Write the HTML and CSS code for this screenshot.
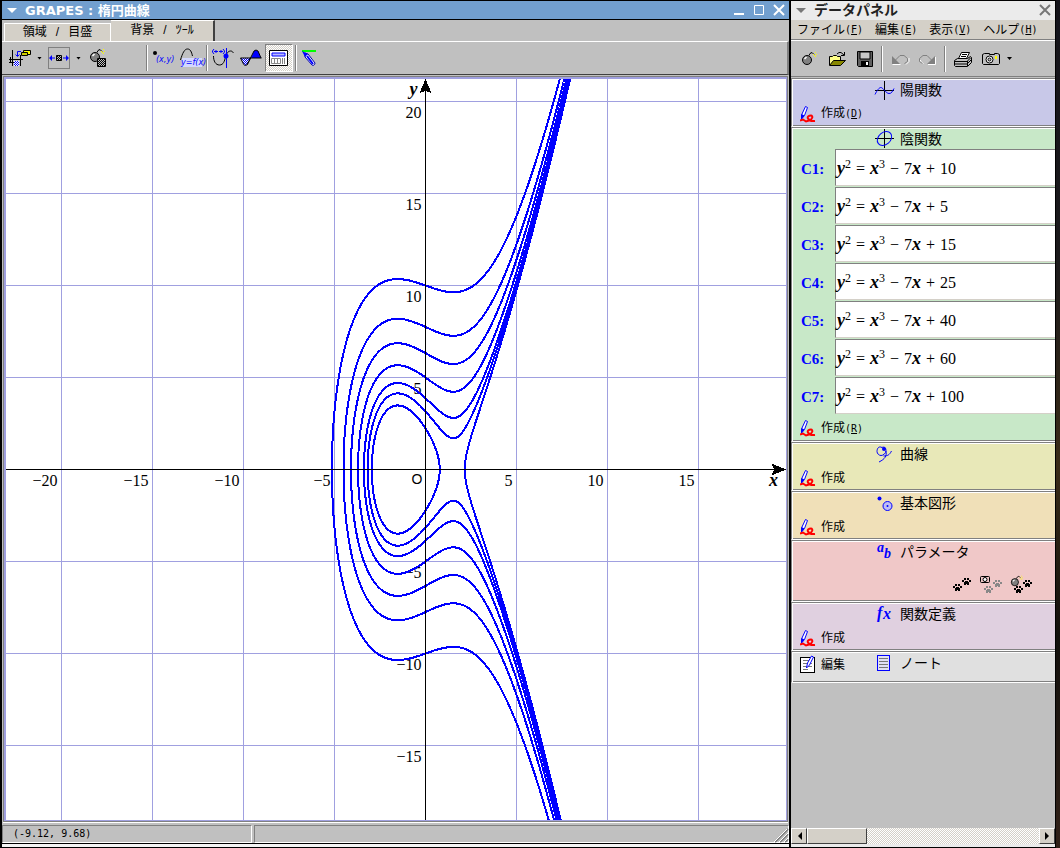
FILE: index.html
```html
<!DOCTYPE html>
<html lang="ja">
<head>
<meta charset="utf-8">
<title>GRAPES : 楕円曲線</title>
<link rel="stylesheet" href="styles.css">
</head>
<body>
<svg class="defs" aria-hidden="true">
  <defs>
    <pattern id="dither" width="2" height="2" patternUnits="userSpaceOnUse"><rect width="1" height="1"/><rect x="1" y="1" width="1" height="1"/></pattern>
    <pattern id="dither-blue" width="2" height="2" patternUnits="userSpaceOnUse"><rect width="2" height="2" fill="#fff"/><rect width="1" height="1" fill="#00f"/><rect x="1" y="1" width="1" height="1" fill="#00f"/></pattern>
    <symbol id="pen" viewBox="0 0 17 18">
      <path d="M5.500 1.500l2 1-3 8-3 3.500v-4z" fill="#fff" stroke="#00f"/><path d="M1.500 9l3 1.500-3 4z" fill="#00f"/>
      <path d="M0 15.500l3-1 3 2 3-1c4-1 4-5 2-5s-4 1-3 3 3 3 7 2.500" fill="none" stroke="#f00" stroke-width="2"/>
    </symbol>
    <symbol id="bomb" viewBox="0 0 16 15">
      <circle cx="6" cy="9" r="4.500" fill="#808080" stroke="#000"/><path d="M3.500 8l2-2" stroke="#fff" stroke-width="1.500"/><path d="M8 4.500l1-2 2-1 2 2" fill="none" stroke="#000"/>
      <path d="M12 3.500h1M14 1.500h1M15 3.500h1M14 5.500h1M13 4.500h1" stroke="#ff0"/>
    </symbol>
    <symbol id="paw" viewBox="0 0 9 8"><path d="M0 2h2v2H0zM2 0h2v2H2zM5 0h2v2H5zM7 2h2v2H7zM3 3h3v1h1v3H5V6H4v1H2V4h1z"/></symbol>
  </defs>
</svg>

<main class="window graph-window">
  <header class="titlebar">
    <span class="menu-mark"></span>
    <h1 class="title">GRAPES : 楕円曲線</h1>
    <div class="window-buttons">
      <button aria-label="最小化"><svg width="12" height="12"><path d="M1 10h10" stroke="#fff" stroke-width="2"/></svg></button>
      <button aria-label="最大化"><svg width="12" height="12"><path d="M1.500 1.500h9v9h-9z" fill="none" stroke="#fff"/></svg></button>
      <button aria-label="閉じる"><svg width="12" height="12"><path d="M1 1l10 10M11 1L1 11" stroke="#fff" stroke-width="2"/></svg></button>
    </div>
  </header>
  <nav class="tabs">
    <button class="tab">領域<span>/</span>目盛</button>
    <button class="tab tab-active">背景<span>/</span>ﾂｰﾙ</button>
  </nav>
  <div class="toolbar main-tools">
    <button class="tool" aria-label="領域"><svg width="22" height="18"><path d="M0 10.500h14M3.500 1v16M11.500 6v11M0 13.500h5M1.500 8v5" stroke="#000"/><path d="M12 2.500H8.500V7M6.500 5.500l2 2 2-2" fill="none" stroke="#00f"/><path d="M5 12h5v5H5z" fill="url(#dither-blue)"/><path d="M14.500 1.500h7v4h-7z" fill="#ff0" stroke="#000"/><path d="M12.500 3.500h6v3h-6z" fill="#cc0" stroke="#000"/></svg></button>
    <button class="drop" aria-label="領域メニュー"></button>
    <button class="tool framed" aria-label="移動"><svg width="20" height="16"><path d="M7.500 5.500h5v5h-5z" fill="url(#dither)" stroke="#000"/><path d="M2 8h4M14 8h4" stroke="#00f"/><path d="M0 8l3-3v6zM20 8l-3-3v6z" fill="#00f"/></svg></button>
    <button class="drop" aria-label="移動メニュー"></button>
    <button class="tool clear-tool" aria-label="消去"><svg width="18" height="20"><use href="#bomb" width="16" height="15"/><path d="M8.500 10.500h8v8h-8z" fill="#c0c0c0" stroke="#000"/><path d="M9 11h7v7H9z" fill="url(#dither)"/></svg></button>
    <i class="sep sep-first"></i>
    <button class="tool" aria-label="点の座標"><svg width="22" height="20"><circle cx="3" cy="5" r="2"/><text class="glyph" x="4" y="14">(x,y)</text></svg></button>
    <button class="tool" aria-label="関数の式"><svg width="22" height="22"><path d="M.500 13c2-7 4-11 7-11s4 3 5 7" fill="none" stroke="#000"/><rect x="2" y="11" width="20" height="9" fill="#d4d8ff"/><text class="glyph" x="1" y="18">y=f(x)</text></svg></button>
    <i class="sep"></i>
    <button class="tool" aria-label="交点"><svg width="22" height="22"><path d="M1.500 9c0 5 2 9 6 9s5-4 6-8 3-6 5-6 2 1 3 2" fill="none" stroke="#000"/><path d="M14.500 1v20" stroke="#00f"/><circle cx="14" cy="9" r="2.500" fill="#00f"/><path d="M2 2L.500 4v1L2 7M11 2l1.500 2v1L11 7M2 4.500h4M4 3v3M7 4.500h4M9 3v3" fill="none" stroke="#00f"/></svg></button>
    <button class="tool" aria-label="面積"><svg width="22" height="18"><path d="M.500 9h10l-3 6-2 2-2-2z" fill="url(#dither-blue)" stroke="#000"/><path d="M11 9l3-7 2-1 2 1 3 7z" fill="#00f"/><path d="M10 9h11.500M7 16l7-14 2-1 2 1 3 7" fill="none" stroke="#000"/></svg></button>
    <button class="tool pressed" aria-label="電卓" aria-pressed="true"><svg width="20" height="16"><path d="M.500.500h18v15H.500z" fill="#fff" stroke="#000"/><path d="M3 3h13v3H3z" fill="#bbf" stroke="#00f"/><path d="M2.500 8.500h9v5h-9z" fill="#fff" stroke="#888"/><path d="M5.500 8v6M8.500 8v6" stroke="#888"/><path d="M13 9h4M13 11h4M13 13h4" stroke="#000" stroke-dasharray="1 1"/></svg></button>
    <i class="sep"></i>
    <button class="tool" aria-label="マーカー"><svg width="18" height="18"><path d="M1 2h14" stroke="#0f0" stroke-width="2"/><path d="M4 4l3 1 7 9c0 2-2 3-3 2L4 8z" fill="#fff" stroke="#00a"/><path d="M6 7l6 8" stroke="#00f" stroke-width="2"/><path d="M1 2l6 3-3 3z" fill="#00f"/></svg></button>
  </div>
  <section class="plot" aria-label="グラフ"><svg id="graph" class="graph"></svg></section>
  <footer class="statusbar">
    <output class="status coords">(-9.12, 9.68)</output>
    <div class="status"><svg width="13" height="13"><path d="M0 13L13 0M5 13l8-8M10 13l3-3" stroke="#808080" stroke-width="2"/><path d="M-1 13L12 0M4 13l9-9M9 13l4-4" stroke="#fff"/></svg></div>
  </footer>
</main>

<aside class="window data-window">
  <header class="titlebar panel-title">
    <span class="menu-mark"></span>
    <h2 class="title">データパネル</h2>
    <div class="window-buttons"><button aria-label="閉じる"><svg width="12" height="12"><path d="M1 1l10 10M11 1L1 11" stroke="#777" stroke-width="2"/></svg></button></div>
  </header>
  <nav class="menubar">
    <button>ファイル<span class="key">(<u>F</u>)</span></button>
    <button>編集<span class="key">(<u>E</u>)</span></button>
    <button>表示<span class="key">(<u>V</u>)</span></button>
    <button>ヘルプ<span class="key">(<u>H</u>)</span></button>
  </nav>
  <div class="toolbar panel-tools">
    <button class="tool" aria-label="新規"><svg width="16" height="15"><use href="#bomb" width="16" height="15"/></svg></button>
    <button class="tool" aria-label="開く"><svg width="18" height="16"><path d="M1.500 14V5.500h3l1-1h3l1 1h3v4" fill="#ff8" stroke="#000"/><path d="M1.500 14.500l4-5h12l-5 5z" fill="#880" stroke="#000"/><path d="M9 3l2-1.500h2l3 2.500M16.500 1v3.500H13" fill="none" stroke="#000"/></svg></button>
    <button class="tool" aria-label="保存"><svg width="16" height="16"><path d="M.500.500h15v15h-14l-1-1z" fill="#606060" stroke="#000"/><path d="M3 1h10v7H3z" fill="#c8c8c8" stroke="#000"/><path d="M4 10h8v5H4z" fill="#000"/><path d="M9 11h2v3H9z" fill="#fff"/></svg></button>
    <i class="sep"></i>
    <button class="tool" aria-label="元に戻す" disabled><svg width="18" height="14"><path d="M1.500 12.500h8M15 12.500l3-3V6" fill="none" stroke="#fff"/><path d="M1 4v8h8z" fill="#808080"/><path d="M4 8.500l5-5h4l3.500 3v3l-3 2" fill="none" stroke="#808080"/></svg></button>
    <button class="tool" aria-label="やり直し" disabled><svg width="18" height="14"><path d="M9 12.500h7.500V5M1.500 8v1l3 3" fill="none" stroke="#fff"/><path d="M16 4v8H8z" fill="#808080"/><path d="M13 8.500l-5-5H4l-3.500 3v3l3 2" fill="none" stroke="#808080"/></svg></button>
    <i class="sep"></i>
    <button class="tool" aria-label="印刷"><svg width="18" height="16"><path d="M4.500 7.500l3-6h8l-3 6z" fill="#fff" stroke="#000"/><path d="M8 3.500h5M7 5.500h5" stroke="#000"/><path d="M.500 9.500l3-2h10l3-2 1 1v5l-4 4h-12l-1-1z" fill="#c0c0c0" stroke="#000"/><path d="M1 10.500h12l4-4M1 13h12l4-4M13.500 10v5" fill="none" stroke="#000"/></svg></button>
    <button class="tool" aria-label="画像"><svg width="18" height="14"><path d="M2.500 1.500h5v1h5v-1h3l2 1v9l-1 1h-15l-1-1v-9z" fill="#c0c0c0" stroke="#000"/><circle cx="7.500" cy="7.500" r="3.500" stroke="#000" fill="#fff"/><circle cx="7.500" cy="7.500" r="1.500" stroke="#000" fill="#c0c0c0"/><path d="M13 4h2v3h-2z" fill="#ff0"/></svg></button>
    <button class="drop" aria-label="画像メニュー"></button>
  </div>

  <div class="sections">
    <section class="section explicit">
      <h3 class="heading"><svg width="19" height="19"><path d="M0 9.500h19M9.500 0v19" stroke="#000"/><path d="M0 13.500c2-4 4-7 6-7s5 6 8 6 3-2 5-5" fill="none" stroke="#00f"/></svg>陽関数</h3>
      <button class="create"><svg width="17" height="18"><use href="#pen"/></svg><span>作成<span class="key">(<u>D</u>)</span></span></button>
    </section>
    <section class="section implicit">
      <h3 class="heading"><svg width="19" height="19"><path d="M0 9.500h19M9.500 0v19" stroke="#000"/><ellipse cx="9.500" cy="9.500" rx="8" ry="6" transform="rotate(-40 9.500 9.500)" fill="none" stroke="#00f"/></svg>陰関数</h3>
      <dl class="formulas" id="formulas"></dl>
      <button class="create"><svg width="17" height="18"><use href="#pen"/></svg><span>作成<span class="key">(<u>R</u>)</span></span></button>
    </section>
    <section class="section curve">
      <h3 class="heading"><svg width="19" height="19"><path d="M7 2.500c-4-2-5 2-5 4s2 4 4 4 5-2 5-5-2-4-4-3M16.500 6c-2 4-4 5-8 5M11 6c1 5-1 8-7 11" fill="none" stroke="#00f"/><circle cx="9" cy="4" r="2" fill="#00f"/></svg>曲線</h3>
      <button class="create"><svg width="17" height="18"><use href="#pen"/></svg>作成</button>
    </section>
    <section class="section shape">
      <h3 class="heading"><svg width="19" height="19"><circle cx="4.500" cy="4.500" r="2" fill="#00f"/><circle cx="12.500" cy="12" r="4.500" fill="#bdbdf4" stroke="#00f"/><circle cx="12.500" cy="12" r="1" fill="#00f"/></svg>基本図形</h3>
      <button class="create"><svg width="17" height="18"><use href="#pen"/></svg>作成</button>
    </section>
    <section class="section parameter">
      <h3 class="heading"><svg width="19" height="19"><text class="letter" x="2" y="9">a</text><text class="letter" x="9" y="15">b</text></svg>パラメータ</h3>
      <div class="paws">
        <button aria-label="残像"><svg width="20" height="20"><use href="#paw" x="1" y="9" width="9" height="8"/><use href="#paw" x="10" y="3" width="9" height="8"/></svg></button>
        <button aria-label="残像を撮る"><svg width="22" height="20"><g fill="#888"><use href="#paw" x="4" y="11" width="9" height="8"/><use href="#paw" x="13" y="5" width="9" height="8"/></g><rect x=".5" y="1.5" width="9" height="6" rx="1" fill="#f0c8c8" stroke="#000"/><circle cx="5" cy="4.500" r="2" fill="#fff" stroke="#000"/></svg></button>
        <button aria-label="残像を消す"><svg width="22" height="20"><use href="#bomb" width="13" height="12"/><use href="#paw" x="4" y="11" width="9" height="8"/><use href="#paw" x="13" y="5" width="9" height="8"/></svg></button>
      </div>
    </section>
    <section class="section function">
      <h3 class="heading"><svg width="19" height="19"><text class="fx" x="2" y="13">f</text><text class="fx" x="8" y="14">x</text></svg>関数定義</h3>
      <button class="create"><svg width="17" height="18"><use href="#pen"/></svg>作成</button>
    </section>
    <section class="section note">
      <button class="create"><svg width="17" height="19"><rect x=".5" y="2.5" width="14" height="15" fill="#fff" stroke="#000"/><path d="M3 5.500h9M3 8.500h9M3 11.500h9M3 14.500h5" stroke="#777"/><path d="M11.500 1l2 1-4 8-3 3 1-5z" fill="#fff" stroke="#00f"/></svg>編集</button>
      <h3 class="heading"><svg width="19" height="17"><rect x="2.500" y=".5" width="12" height="15" fill="#e0e0f4" stroke="#00f"/><path d="M4 3.500h9M4 6.500h9M4 9.500h9M4 12.500h9" stroke="#777"/></svg>ノート</h3>
    </section>
  </div>
  <div class="scrollbar">
    <button aria-label="左へ"><svg width="5" height="8"><path d="M5 0v8L1 4z"/></svg></button>
    <div class="track"><div class="thumb"></div></div>
    <button aria-label="右へ"><svg width="5" height="8"><path d="M0 0v8l4-4z"/></svg></button>
  </div>
</aside>
<script src="graph.js"></script>
</body>
</html>
```

FILE: styles.css
```css
* { box-sizing: border-box; }
body {
  margin: 0;
  height: 100vh;
  padding: 1px 5px 1px 2px;
  display: grid;
  grid-template-columns: minmax(0, 1fr) 264px;
  gap: 2px;
  background: linear-gradient(#14131a, #1c1a1c 30%, #3a2c18 55%, #12100c 75%, #302018) right / 4px 100% no-repeat #000;
  font: 12px/16px "Liberation Sans", "Noto Sans CJK JP", sans-serif;
  color: #000;
}
.defs { position: absolute; width: 0; height: 0; }
h1, h2, h3, dl, dd, dt { margin: 0; font-weight: normal; }
button { border: 0; padding: 0; margin: 0; background: none; font: inherit; color: inherit; }
svg { display: block; flex: none; overflow: visible; }

.window { display: flex; flex-direction: column; min-width: 0; min-height: 0; background: #c0c0c0; border-bottom: 3px solid #ebebeb; }
.graph-window { border-bottom-color: #f4f4f4; }

.titlebar { display: flex; align-items: center; gap: 8px; height: 19px; flex: none; padding: 0 4px 0 5px; background: #729fcf; border-bottom: 1px solid #000; color: #fff; }
.title { flex: 1; font: bold 13px/17px "DejaVu Sans", "Noto Sans CJK JP", sans-serif; }
.menu-mark { width: 9px; border: solid transparent; border-width: 5px 5px 0; border-top-color: currentColor; }
.window-buttons { display: flex; gap: 8px; }
.panel-title { background: #ebebeb; border-bottom-color: #ebebeb; color: #777; }
.panel-title .title { color: #222; font-size: 14px; }

.tabs { display: flex; align-items: flex-end; height: 21px; flex: none; padding-left: 2px; }
.tab { display: flex; justify-content: center; gap: 9px; width: 107px; height: 18px; background: #d4d0c8; border: 1px solid #fff; border-bottom-width: 0; }
.tab-active { width: 104px; height: 21px; padding-top: 1px; border-left: 0; border-right: 2px solid #404040; }

.toolbar { display: flex; align-items: center; flex: none; border-top: 1px solid #fff; }
.tool { display: flex; align-items: center; justify-content: center; }
.drop { width: 5px; height: 3px; background: #000; clip-path: polygon(0 0, 100% 0, 50% 100%); }
.sep { width: 2px; height: 26px; margin: 0 -2px; background: linear-gradient(90deg, #808080 50%, #fff 50%); }
.main-tools { height: 34px; gap: 6px; padding-left: 7px; border-right: 2px solid #808080; border-bottom: 1px solid #404040; }
.framed { width: 22px; height: 22px; border: 1px solid #808080; }
.clear-tool { margin-left: 2px; }
.sep-first { margin-left: 33px; }
.pressed { width: 28px; height: 28px; margin: 0 -2px 0 -3px; border: 1px solid; border-color: #808080 #fff #fff #808080; background: repeating-conic-gradient(#fff 0 25%, #d4d0c8 0 50%) 0 0 / 2px 2px; }
.glyph { font: italic 8px "DejaVu Sans", sans-serif; fill: #00f; }

.plot { flex: 1; min-height: 0; margin: 1px 1px 0; border: 1px solid #808080; box-shadow: 0 1px #fff; background: #fff; }
.graph { width: 100%; height: 100%; border: solid #a0a0e0; border-width: 2px 1px 1px 2px; background: #fff; overflow: hidden; shape-rendering: crispEdges; }
.grid { stroke: #a0a0e0; fill: none; }
.axis { stroke: #000; fill: none; }
.curve-line { stroke: #00f; stroke-width: 2; fill: none; }
.tick { font: 16px "Liberation Serif", serif; text-anchor: end; }
.axis-name { font: italic bold 18px "Liberation Serif", serif; }
.origin { font: 14px "Liberation Sans", sans-serif; text-anchor: end; }

.statusbar { display: flex; gap: 2px; height: 22px; flex: none; padding-top: 3px; border-bottom: 1px solid #000; }
.status { flex: 1; display: flex; align-items: flex-end; justify-content: flex-end; border: 1px solid; border-color: #808080 #fff #fff #808080; }
.coords { flex: 0 0 250px; align-items: center; justify-content: flex-start; padding-left: 10px; font: 10px/16px "DejaVu Sans Mono", monospace; }

.menubar { display: flex; gap: 12px; height: 20px; flex: none; padding: 0 6px; background: #d4d0c8; border-bottom: 1px solid #808080; white-space: nowrap; }
.menubar button { display: flex; align-items: center; }
.key { font: 10px/16px "DejaVu Sans Mono", monospace; }
.panel-tools { height: 37px; gap: 9px; padding-left: 8px; border-bottom: 1px solid #808080; }
.panel-tools .tool { width: 19px; }
.panel-tools .drop { margin-left: -2px; }

.sections { flex: 1; min-height: 0; padding-top: 1px; }
.section { border: solid; border-width: 1px 0 1px 1px; border-color: #808080 transparent #fff #808080; box-shadow: inset 1px 1px #fff, inset 0 -1px #808080; }
.explicit { background: #c8c8e8; }
.implicit { background: #c8e8c8; }
.curve { background: #e8e8b8; }
.shape { background: #f0e0b8; }
.parameter { background: #f0c8c8; }
.function { background: #e0d0e0; }
.heading { display: flex; align-items: center; gap: 6px; height: 22px; padding-left: 83px; font-size: 14px; line-height: 20px; }
.create { display: flex; align-items: center; gap: 4px; height: 25px; padding-left: 8px; }
.implicit .heading { height: 21px; }
.implicit .create { height: 26px; }
.paws { display: flex; justify-content: flex-end; align-items: center; gap: 8px; height: 38px; padding: 5px 23px 0 0; }
.note { display: flex; align-items: flex-start; height: 32px; background: #e0e0e0; }
.note .create { width: 55px; }
.note .heading { padding-left: 28px; }
.letter { font: italic bold 14px "Liberation Serif", serif; fill: #00f; }
.fx { font: italic bold 16px "Liberation Serif", serif; fill: #00f; }

.formula { display: grid; grid-template-columns: 43px 1fr; height: 37px; margin-bottom: 1px; align-items: center; }
.formula-name { padding: 2px 0 0 9px; font: bold 15px/20px "Liberation Serif", serif; color: #00f; }
.formula-body { display: flex; align-items: center; gap: 5px; height: 37px; padding: 2px 0 0 1px; background: #fff; border: solid; border-width: 1px 0 1px 1px; border-color: #808080 #808080 #d4d0c8; font: 16px/20px "Liberation Serif", serif; }
.formula-body i { font-size: 18px; font-weight: bold; }
.formula-body sup { font-size: 12px; line-height: 0; }

.scrollbar { display: flex; height: 16px; flex: none; }
.scrollbar button, .thumb { display: flex; align-items: center; justify-content: center; width: 16px; background: #d4d0c8; border: 1px solid; border-color: #fff #404040 #404040 #fff; }
.track { flex: 1; background: repeating-conic-gradient(#fff 0 25%, #d4d0c8 0 50%) 0 0 / 2px 2px; }
.thumb { width: 60px; height: 16px; }
```

FILE: graph.js
```js
const constants = [10, 5, 15, 25, 40, 60, 100];
const unit = { x: 18.2, y: 18.4 };
const origin = { x: 419.5, y: 390.5 };
const svg = document.getElementById('graph');
const width = svg.clientWidth;
const height = svg.clientHeight;

const px = x => origin.x + x * unit.x;
const py = y => origin.y - y * unit.y;

function add(name, attributes, text) {
  const node = document.createElementNS('http://www.w3.org/2000/svg', name);
  for (const key in attributes) node.setAttribute(key, attributes[key]);
  if (text) node.textContent = text;
  svg.append(node);
}

let grid = '';
for (let n = -40; n <= 40; n += 5) {
  if (n === 0) continue;
  grid += `M${px(n)} 0V${height}M0 ${py(n)}H${width}`;
}
add('path', { class: 'grid', d: grid });

for (let n = -20; n <= 20; n += 5) {
  if (n === 0) continue;
  const label = String(n).replace('-', '−');
  if (n < 20) add('text', { class: 'tick', x: px(n) - 4, y: origin.y + 16 }, label);
  if (n > -20) add('text', { class: 'tick', x: origin.x - 4, y: py(n) + 16 }, label);
}
add('text', { class: 'origin', x: origin.x - 3, y: origin.y + 14 }, 'O');

// Each branch y = ±√(x³ − 7x + c) is sampled where the radicand is positive.
for (const c of constants) {
  const value = x => x * x * x - 7 * x + c;
  const step = 0.01;
  let d = '';
  for (const sign of [1, -1]) {
    let inside = false;
    for (let x = -6; x <= 9; x += step) {
      const v = value(x);
      if (v < 0) {
        if (inside) d += `L${px(x).toFixed(1)} ${py(0)}`;
        inside = false;
        continue;
      }
      if (!inside) d += `M${px(x).toFixed(1)} ${py(0)}`;
      d += `L${px(x).toFixed(1)} ${py(sign * Math.sqrt(v)).toFixed(1)}`;
      inside = true;
    }
  }
  add('path', { class: 'curve-line', d });
}

add('path', { class: 'axis', d: `M${origin.x} 0V${height}M0 ${origin.y}H${width}` });
add('path', { d: `M${origin.x} 0l6 14l-6 -2l-6 2z` });
add('path', { d: `M${width} ${origin.y}l-15 -6l3 6l-3 6z` });
add('text', { class: 'axis-name', x: origin.x - 16, y: 16 }, 'y');
add('text', { class: 'axis-name', x: width - 17, y: origin.y + 16 }, 'x');

document.getElementById('formulas').innerHTML = constants.map((c, i) => `
  <div class="formula">
    <dt class="formula-name">C${i + 1}:</dt>
    <dd class="formula-body"><span><i>y</i><sup>2</sup></span><span>=</span><span><i>x</i><sup>3</sup></span><span>−</span><span>7<i>x</i></span><span>+</span><span>${c}</span></dd>
  </div>`).join('');
```
